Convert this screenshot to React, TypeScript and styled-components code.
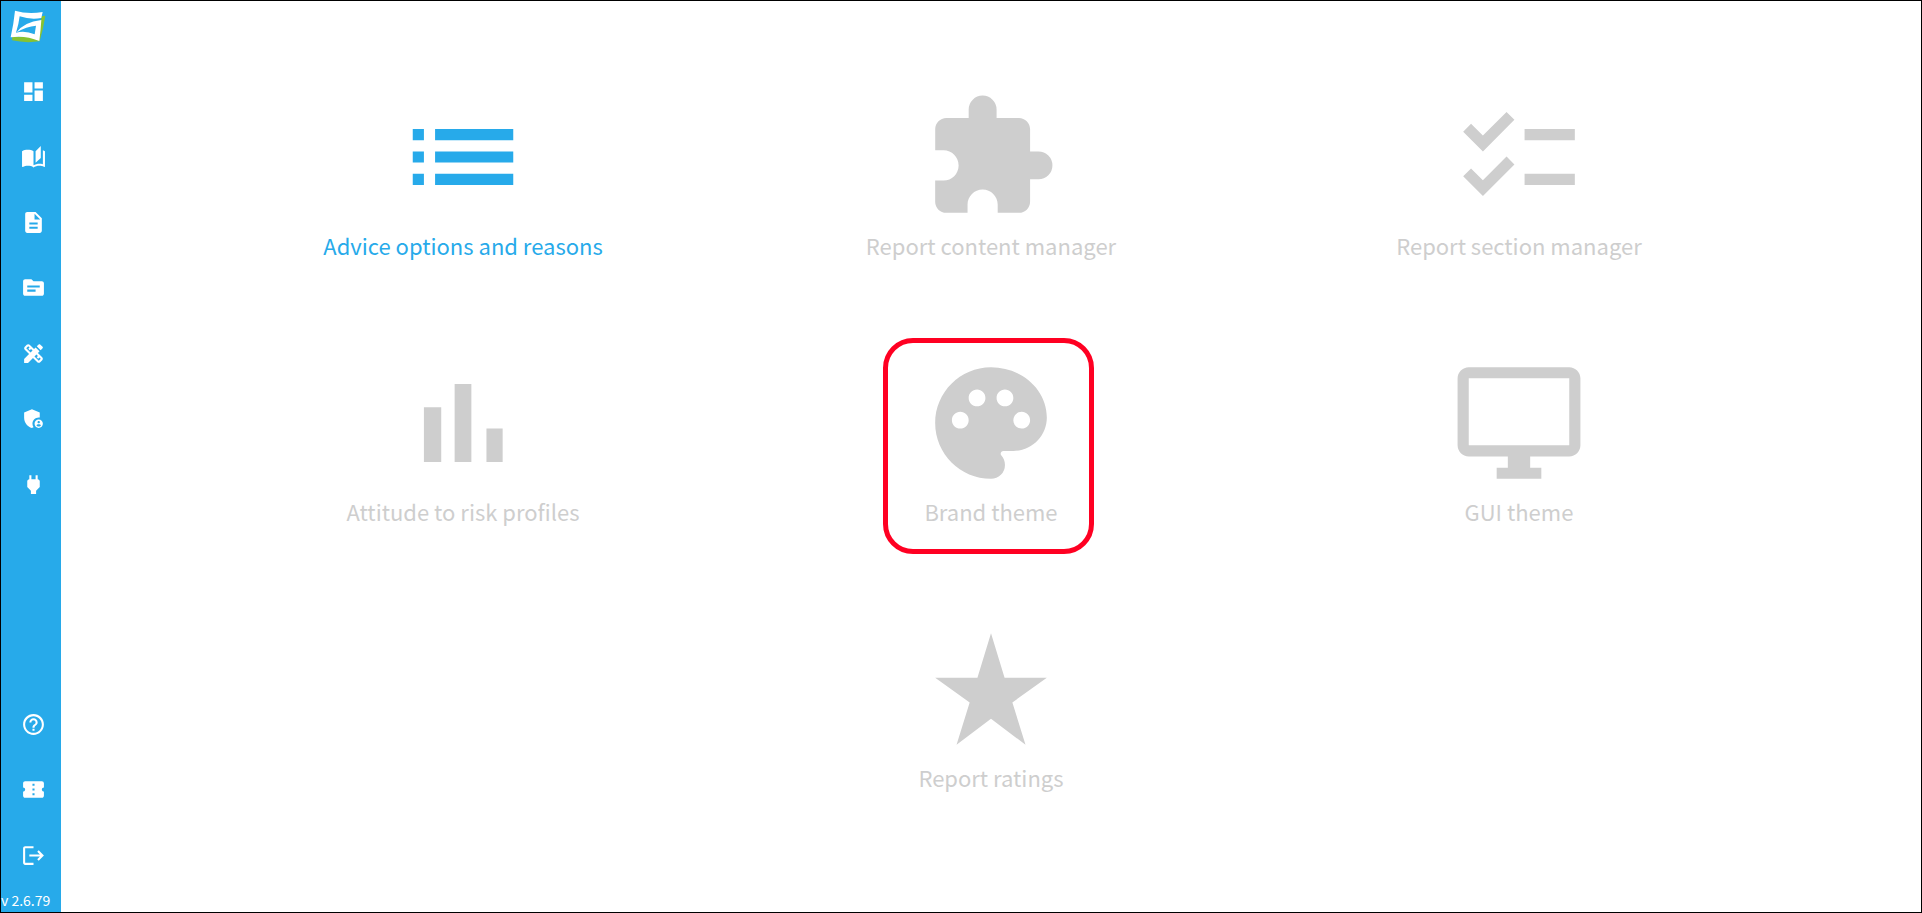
import React from 'react';
import styled, { createGlobalStyle } from 'styled-components';
import {
  MdAdminPanelSettings,
  MdAutoStories,
  MdChecklist,
  MdConfirmationNumber,
  MdDashboard,
  MdDescription,
  MdDesignServices,
  MdExtension,
  MdHelpOutline,
  MdList,
  MdLogout,
  MdPalette,
  MdPower,
  MdSource,
  MdStarRate,
} from 'react-icons/md';

const GlobalStyle = createGlobalStyle`
  *, *::before, *::after { box-sizing: border-box; }
  body {
    margin: 0;
    background: #fff;
    font-family: 'Source Sans Pro', 'Noto Sans CJK SC', sans-serif;
  }
`;

const Page = styled.div`
  display: flex;
  min-height: 100vh;
  border: 1px solid #000;
`;

const Sidebar = styled.aside`
  display: flex;
  flex-direction: column;
  flex: 0 0 60px;
  background: #27aaea;
  color: #fff;
`;

const LogoLink = styled.a`
  display: block;
  height: 58px;
  padding: 8px 0 0 8px;
`;

const Nav = styled.nav<{ $height: number }>`
  display: flex;
  flex-direction: column;
  height: ${(p) => p.$height}px;
`;

const Spacer = styled.div`
  flex: 1;
`;

const NavLink = styled.a`
  display: flex;
  flex: 1;
  align-items: center;
  justify-content: center;
  padding-left: 4px;
  color: inherit;

  svg {
    width: 25px;
    height: 25px;
  }
`;

const Version = styled.div`
  height: 24px;
  font-size: 14px;
  line-height: 24px;
  white-space: nowrap;
`;

const Main = styled.main`
  flex: 1;
  padding: 89px 138px 0;
`;

const Tiles = styled.div`
  display: flex;
  flex-wrap: wrap;
  justify-content: center;
  row-gap: 90px;
`;

const Cell = styled.div`
  display: flex;
  flex: 0 0 calc(100% / 3);
  justify-content: center;
`;

const Tile = styled.button<{ $active?: boolean }>`
  position: relative;
  display: flex;
  flex-direction: column;
  align-items: center;
  padding: 0;
  border: 0;
  background: none;
  color: ${(p) => (p.$active ? '#27aaea' : '#cecece')};
  font-family: inherit;
  font-size: 22px;
  line-height: 42px;
  cursor: pointer;

  svg {
    width: 134px;
    height: 134px;
  }
`;

const Highlight = styled.span`
  position: absolute;
  top: -18px;
  left: calc(50% - 108px);
  width: 211px;
  height: 216px;
  border: 5px solid #ff0022;
  border-radius: 30px;
  pointer-events: none;
`;

const BarsIcon = () => (
  <svg viewBox="0 0 24 24" fill="currentColor" aria-hidden="true">
    <path d="M5 9.2h3.1V19H5zM10.5 5h3v14h-3zM16.2 13h2.9v6h-2.9z" />
  </svg>
);

const MonitorIcon = () => (
  <svg viewBox="0 0 24 24" fill="currentColor" aria-hidden="true">
    <path d="M21 2H3c-1.1 0-2 .9-2 2v12c0 1.1.9 2 2 2h7v2H8v2h8v-2h-2v-2h7c1.1 0 2-.9 2-2V4c0-1.1-.9-2-2-2zm0 14H3V4h18v12z" />
  </svg>
);

const Logo = () => (
  <svg width="38" height="36" viewBox="27 27 114 108" aria-hidden="true">
    <path fill="#86c232" d="M125 49L136 47Q130 86 119 124Q76 130 36 121L37 110L112 112Z" />
    <path
      fill="#fff"
      d="M45 32Q84 44 128 36L124 54Q92 60 59 49Q56 74 48 98Q76 91 104 103L108 77Q79 79 50 97Q72 66 124 60Q122 91 118 123Q75 105 32 112Q41 72 45 32Z"
    />
  </svg>
);

interface Item {
  label: string;
  icon: React.ComponentType;
  active?: boolean;
  highlighted?: boolean;
}

const primaryLinks: Item[] = [
  { label: 'Dashboard', icon: MdDashboard },
  { label: 'Library', icon: MdAutoStories },
  { label: 'Documents', icon: MdDescription },
  { label: 'Files', icon: MdSource },
  { label: 'Design', icon: MdDesignServices },
  { label: 'Administration', icon: MdAdminPanelSettings },
  { label: 'Integrations', icon: MdPower },
];

const secondaryLinks: Item[] = [
  { label: 'Help', icon: MdHelpOutline },
  { label: 'Tickets', icon: MdConfirmationNumber },
  { label: 'Log out', icon: MdLogout },
];

const tiles: Item[] = [
  { label: 'Advice options and reasons', icon: MdList, active: true },
  { label: 'Report content manager', icon: MdExtension },
  { label: 'Report section manager', icon: MdChecklist },
  { label: 'Attitude to risk profiles', icon: BarsIcon },
  { label: 'Brand theme', icon: MdPalette, highlighted: true },
  { label: 'GUI theme', icon: MonitorIcon },
  { label: 'Report ratings', icon: MdStarRate },
];

const NavGroup = ({ items, height, label }: { items: Item[]; height: number; label: string }) => (
  <Nav $height={height} aria-label={label}>
    {items.map(({ label: text, icon: Icon }) => (
      <NavLink key={text} href="#" aria-label={text}>
        <Icon />
      </NavLink>
    ))}
  </Nav>
);

export default function App() {
  return (
    <>
      <GlobalStyle />
      <Page>
        <Sidebar>
          <LogoLink href="#" aria-label="Home">
            <Logo />
          </LogoLink>
          <NavGroup items={primaryLinks} height={458} label="Primary" />
          <Spacer />
          <NavGroup items={secondaryLinks} height={196} label="Secondary" />
          <Version>v 2.6.79</Version>
        </Sidebar>
        <Main>
          <Tiles>
            {tiles.map(({ label, icon: Icon, active, highlighted }) => (
              <Cell key={label}>
                <Tile type="button" $active={active}>
                  <Icon />
                  {label}
                  {highlighted && <Highlight />}
                </Tile>
              </Cell>
            ))}
          </Tiles>
        </Main>
      </Page>
    </>
  );
}
